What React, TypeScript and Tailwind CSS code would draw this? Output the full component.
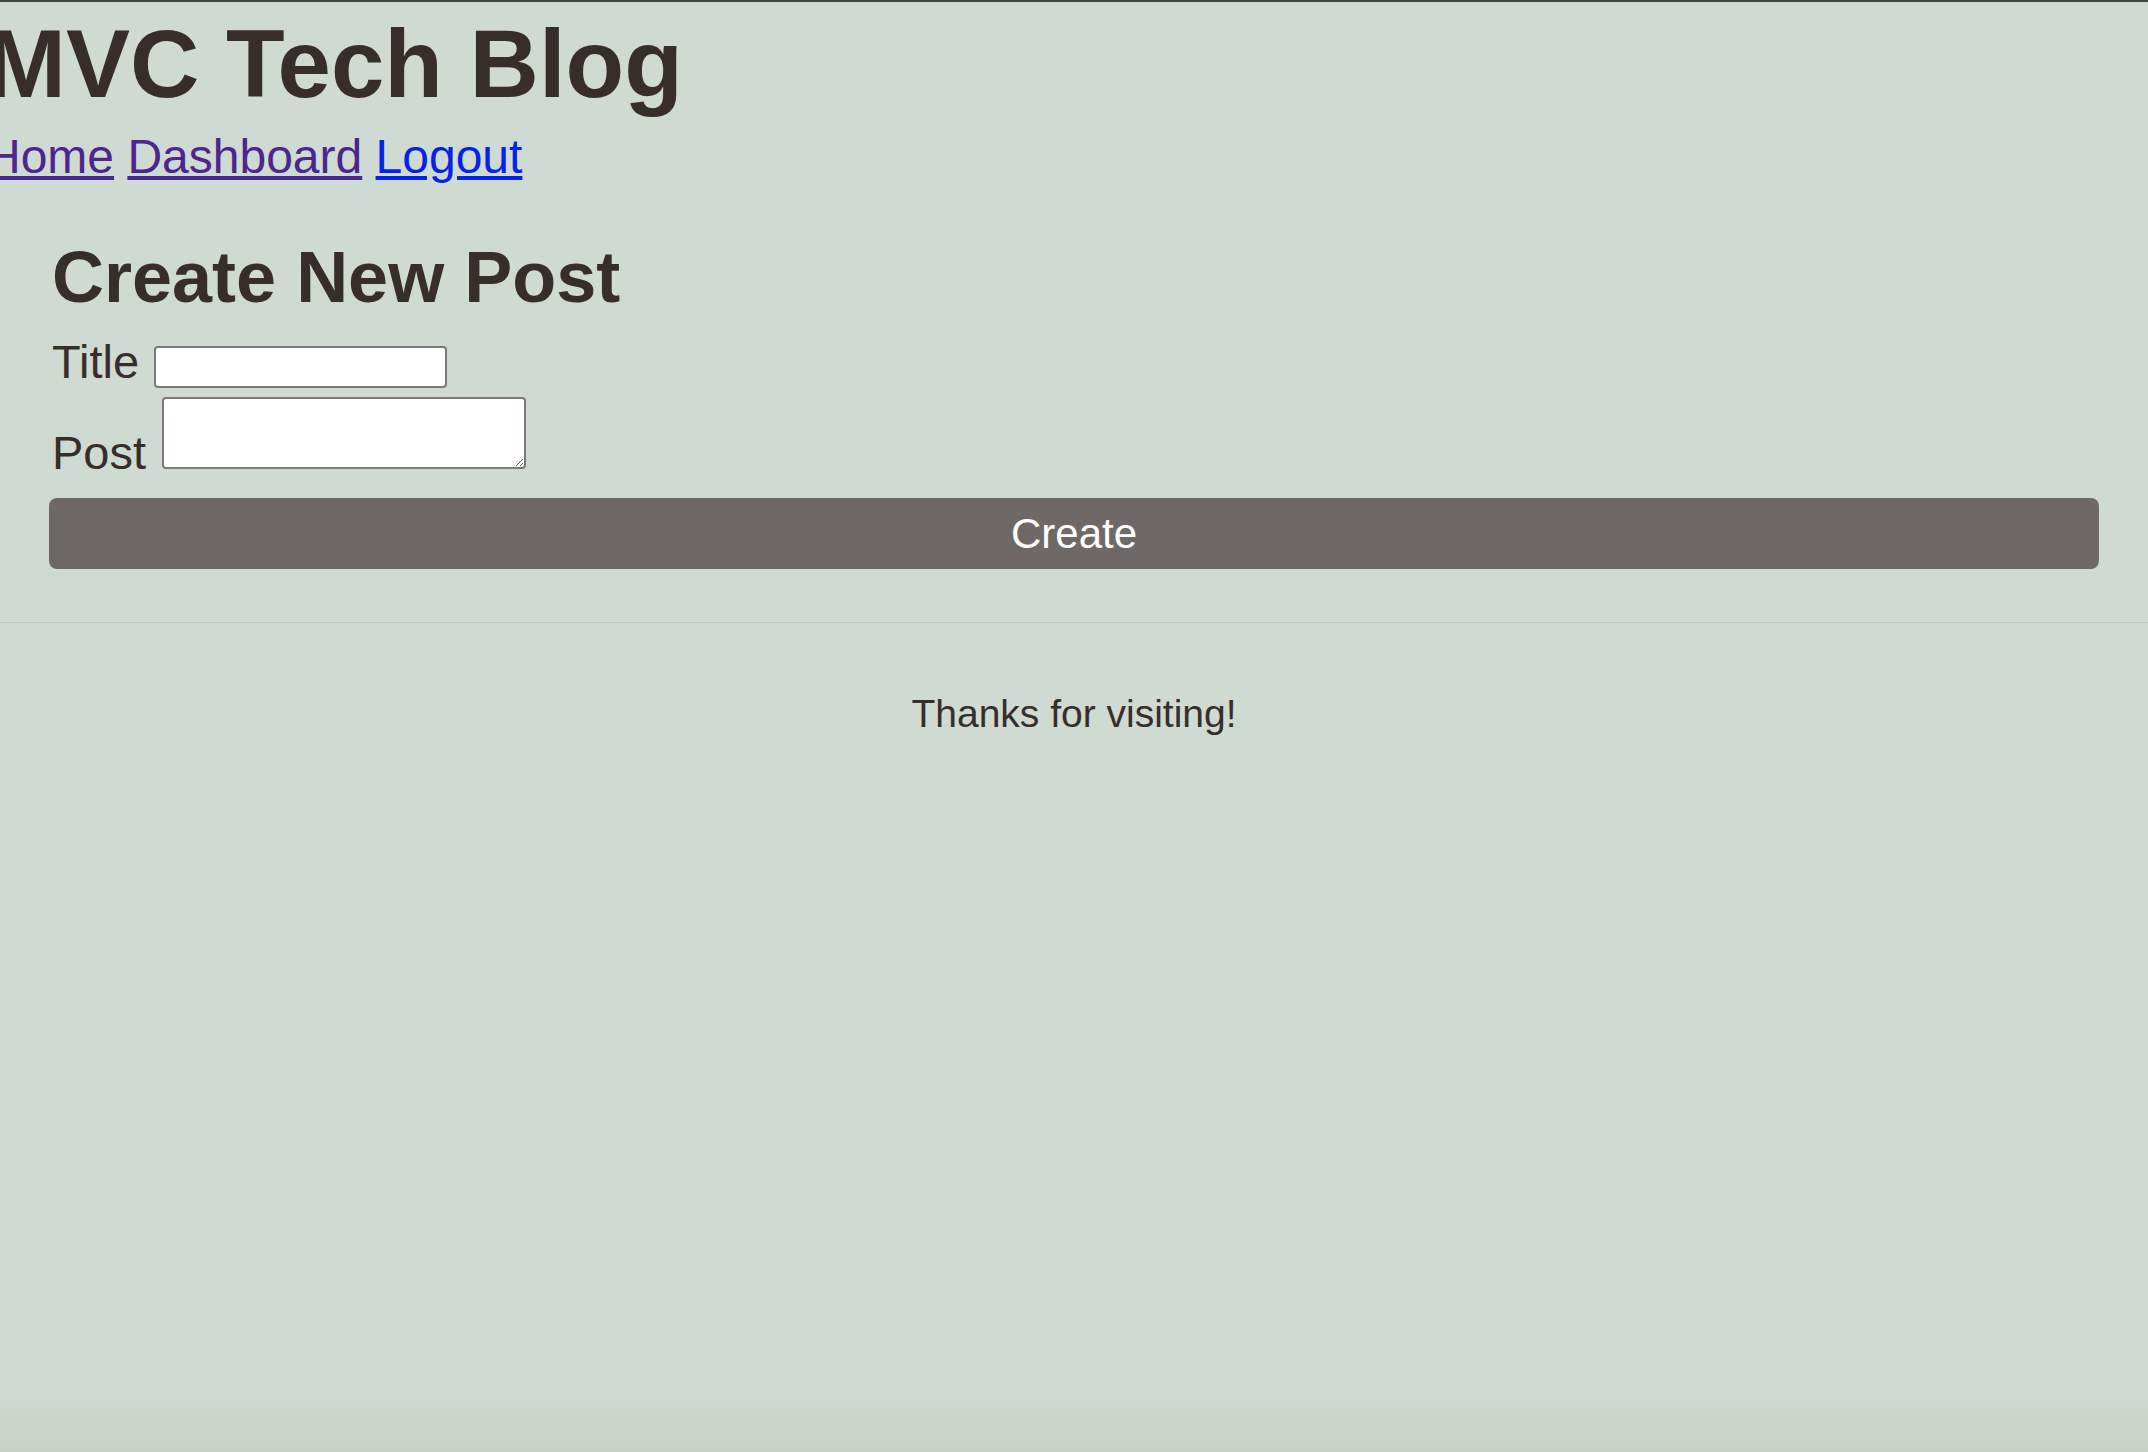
import React from "react";

function NewPost() {
  return (
    <div className="min-h-screen flex flex-col bg-[#cfdad2] border-t-2 border-[#3f4742] overflow-hidden font-['Liberation_Sans',Arial,sans-serif] text-[#372e2c]">
      <header className="-ml-[14px] pt-[7px]">
        <h1 className="text-[96px] font-bold leading-[110px] whitespace-nowrap">
          MVC Tech Blog
        </h1>
        <nav className="mt-[10px] text-[48px] leading-[55px] whitespace-nowrap">
          <a href="#" className="text-[#4e248e] underline">
            Home
          </a>{" "}
          <a href="#" className="text-[#4e248e] underline">
            Dashboard
          </a>{" "}
          <a href="#" className="text-[#0523e6] underline">
            Logout
          </a>
        </nav>
      </header>

      <main className="px-[49px] mt-[52px]">
        <h2 className="ml-[3px] text-[72px] font-bold leading-[83px]">Create New Post</h2>
        <form onSubmit={(e) => e.preventDefault()}>
          <div className="flex items-start mt-[16px] ml-[3px]">
            <label htmlFor="post-title" className="text-[47px] leading-[53px]">
              Title
            </label>
            <input
              id="post-title"
              type="text"
              className="ml-[15px] mt-[11px] w-[293px] h-[42px] bg-white border-2 border-[#7a7a7a] rounded-[4px] px-2 text-[20px] outline-none"
            />
          </div>
          <div className="flex items-start mt-[9px] ml-[3px]">
            <label htmlFor="post-body" className="mt-[29px] text-[47px] leading-[53px]">
              Post
            </label>
            <textarea
              id="post-body"
              className="ml-[16px] w-[364px] h-[72px] bg-white border-2 border-[#7a7a7a] rounded-[4px] px-2 text-[20px] outline-none"
            />
          </div>
          <button
            type="submit"
            className="mt-[19px] w-full h-[71px] rounded-[8px] bg-[#6e6966] text-white text-[42px] leading-none"
          >
            Create
          </button>
        </form>
      </main>

      <footer className="mt-[53px] border-t border-[#c9c5c8] pt-[68px] text-center">
        <p className="text-[39px] leading-[45px]">Thanks for visiting!</p>
      </footer>

      <div className="flex-1" />
      <div className="h-[64px] bg-linear-to-b from-[#cfdad2] to-[#c6d1c8]" />
    </div>
  );
}

export default function App() {
  return <NewPost />;
}
